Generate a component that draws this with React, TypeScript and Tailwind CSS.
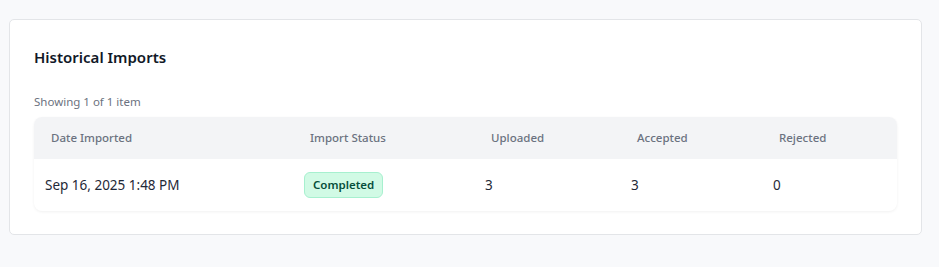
import React from "react";

const cols = ["w-[259px]", "w-[181px]", "w-[146px]", "w-[142px]", "flex-1"];

const rows = [
  { date: "Sep 16, 2025 1:48 PM", status: "Completed", uploaded: 3, accepted: 3, rejected: 0 },
];

export default function App() {
  return (
    <div className="min-h-screen bg-[#f8f9fb] pt-[19px] pl-[9px] pr-[17px] font-['Noto_Sans',sans-serif]">
      <div className="bg-white border border-[#e3e5e8] rounded-[5px] px-6 pt-[25px] pb-[23px]">
        <h2 className="text-[15px] font-semibold text-[#111827] leading-[24px]">Historical Imports</h2>

        <p className="mt-[25px] text-[11.5px] text-[#6b7280] leading-[16px]">Showing 1 of 1 item</p>

        <div className="mt-[7px] rounded-lg bg-white shadow-[0_1px_3px_rgba(0,0,0,0.06)] overflow-hidden">
          {/* header */}
          <div className="flex h-[42px] items-center bg-[#f3f4f6] text-[11.5px] font-medium text-[#6b7280]">
            {["Date Imported", "Import Status", "Uploaded", "Accepted", "Rejected"].map((h, i) => (
              <div key={h} className={`${cols[i]} pl-[17px]`}>
                {h}
              </div>
            ))}
          </div>

          {rows.map((r) => (
            <div key={r.date} className="flex h-[52px] items-center text-[13.5px] text-[#1f2937]">
              <div className={`${cols[0]} pl-[11px]`}>{r.date}</div>
              <div className={`${cols[1]} pl-[11px]`}>
                <span className="inline-flex h-[26px] items-center rounded-md border border-[#a7f0cf] bg-[#d1fae5] px-2 text-[11.5px] font-semibold text-[#064e3b]">
                  {r.status}
                </span>
              </div>
              <div className={`${cols[2]} pl-[11px]`}>{r.uploaded}</div>
              <div className={`${cols[3]} pl-[11px]`}>{r.accepted}</div>
              <div className={`${cols[4]} pl-[11px]`}>{r.rejected}</div>
            </div>
          ))}
        </div>
      </div>
    </div>
  );
}
